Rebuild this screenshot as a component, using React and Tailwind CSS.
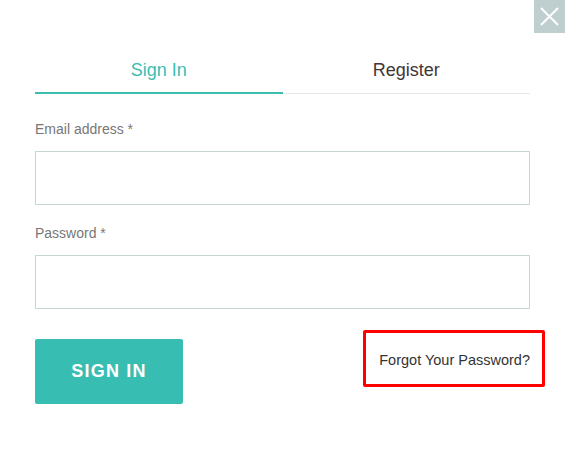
// App.jsx - sign in modal
import React, { useState } from 'react';

const App = () => {
  const [tab, setTab] = useState('signin');

  return (
    <div className="relative w-[565px] h-[449px] bg-white font-['Liberation_Sans',Arial,sans-serif]">
      {/* Close button */}
      <button className="absolute top-0 right-0 w-[31px] h-[33px] bg-[#bfcfd0] flex items-center justify-center">
        <svg width="19" height="19" viewBox="0 0 19 19" fill="none" stroke="white" strokeWidth="2">
          <path d="M1 1 L18 18 M18 1 L1 18" />
        </svg>
      </button>

      <div className="pt-[48px] px-[35px]">
        {/* Tabs */}
        <div className="flex">
          <button
            onClick={() => setTab('signin')}
            className="flex-1 h-[46px] flex items-center justify-center text-[18px] text-[#3bbdb2] border-b-2 border-[#3bbdb2]"
          >
            Sign In
          </button>
          <button
            onClick={() => setTab('register')}
            className="flex-1 h-[46px] flex items-center justify-center text-[18px] text-[#3f3636] border-b border-[#e8e8e8]"
          >
            Register
          </button>
        </div>

        {/* Form */}
        <div className="mt-[25px]">
          <label className="block text-[14px] leading-[20px] text-[#777]">Email address *</label>
          <input className="mt-[12px] block w-full h-[54px] border border-[#c8d5d7] outline-none px-3" />
        </div>
        <div className="mt-[18px]">
          <label className="block text-[14px] leading-[20px] text-[#777]">Password *</label>
          <input type="password" className="mt-[12px] block w-full h-[54px] border border-[#c8d5d7] outline-none px-3" />
        </div>

        <div className="mt-[21px] flex items-start justify-between">
          <button className="mt-[9px] w-[148px] h-[65px] bg-[#38bdb3] rounded-[2px] text-white text-[18px] font-bold tracking-[1.2px]">
            SIGN IN
          </button>
          <a className="-mr-[15px] w-[182px] h-[57px] border-[3px] border-[#ff0000] rounded-[2px] flex items-center justify-end pr-[12px] pt-[5px] text-[14.5px] text-[#333]">
            Forgot Your Password?
          </a>
        </div>
      </div>
    </div>
  );
};

export default App;
